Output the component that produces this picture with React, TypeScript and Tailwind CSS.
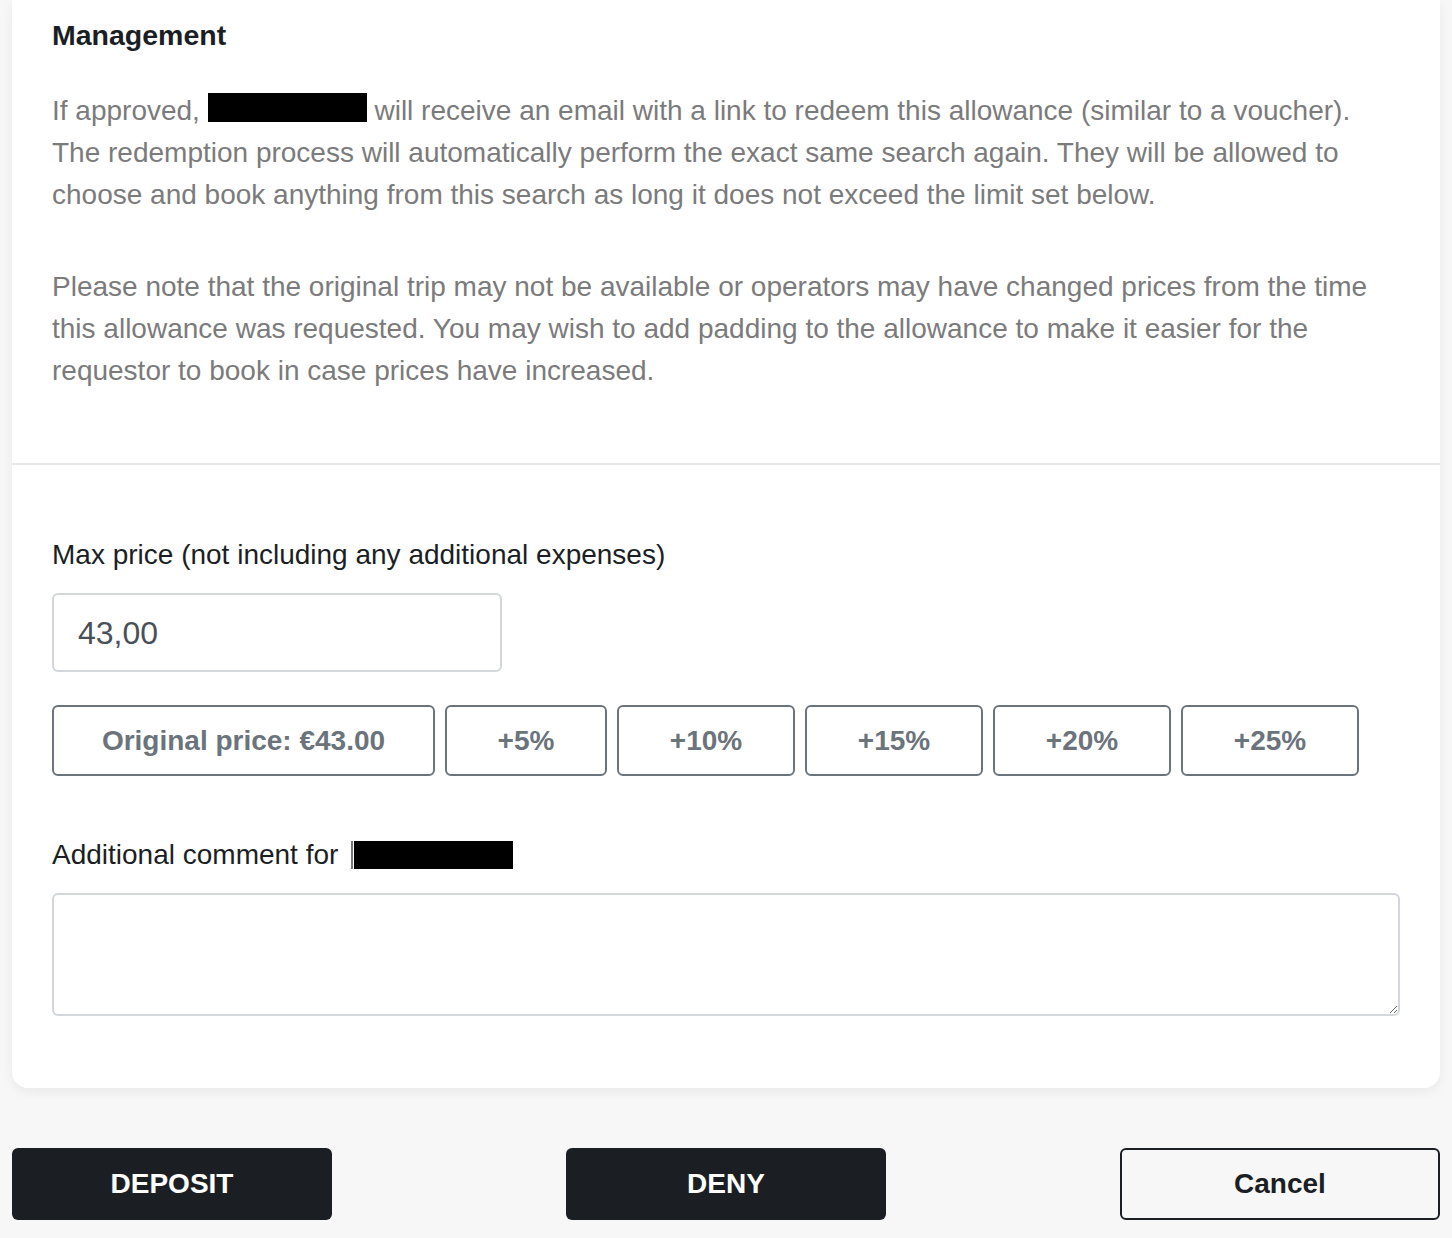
import React from "react";

const font = { fontFamily: '"Liberation Sans", Arial, Helvetica, sans-serif' };

export default function App() {
  const pcts = ["+5%", "+10%", "+15%", "+20%", "+25%"];
  return (
    <div className="min-h-[1238px] bg-[#f7f7f7] px-[12px] pb-[18px]" style={font}>
      <div className="rounded-b-[16px] bg-white shadow-[0_4px_12px_rgba(0,0,0,0.06)]">
        <div className="px-[40px] pt-[18px] pb-[71px]">
          <h2 className="text-[28.5px] font-bold leading-[34px] text-[#1b1f24]">Management</h2>
          <p className="mt-[38px] text-[28px] leading-[42px] text-[#7b7b7b]">
            If approved, <span className="inline-block h-[29px] w-[159px] bg-black align-[-2px]" /> will receive an email with a link to redeem this allowance (similar to a voucher). The redemption process will automatically perform the exact same search again. They will be allowed to choose and book anything from this search as long it does not exceed the limit set below.
          </p>
          <p className="mt-[50px] text-[28px] leading-[42px] text-[#7b7b7b]">
            Please note that the original trip may not be available or operators may have changed prices from the time this allowance was requested. You may wish to add padding to the allowance to make it easier for the requestor to book in case prices have increased.
          </p>
        </div>
        <div className="h-[2px] bg-[#e8e8e8]" />
        <div className="px-[40px] pt-[69px] pb-[72px]">
          <label className="block text-[28px] leading-[42px] text-[#1b1f24]">
            Max price (not including any additional expenses)
          </label>
          <div className="mt-[17px] flex h-[79px] w-[450px] items-center rounded-[6px] border-2 border-[#d3d7dc] px-[24px] text-[32px] text-[#4a5058]">
            43,00
          </div>
          <div className="mt-[33px] flex gap-[10px]">
            <button className="h-[71px] w-[383px] rounded-[6px] border-2 border-[#6b737b] text-[28px] font-bold text-[#6b737b]">
              Original price: €43.00
            </button>
            {pcts.map((p, i) => (
              <button
                key={p}
                className={
                  "h-[71px] rounded-[6px] border-2 border-[#6b737b] text-[28px] font-bold text-[#6b737b] " +
                  (i === 0 ? "w-[162px]" : "w-[178px]")
                }
              >
                {p}
              </button>
            ))}
          </div>
          <label className="mt-[58px] block text-[28px] leading-[42px] text-[#1b1f24]">
            Additional comment for{" "}
            <span className="ml-[5px] inline-block h-[28px] w-[2px] bg-[#1b1f24] align-[-5px] opacity-60" />
            <span className="ml-[1px] inline-block h-[28px] w-[159px] bg-black align-[-5px]" />
          </label>
          <textarea className="mt-[17px] block h-[123px] w-full resize-y rounded-[6px] border-2 border-[#d3d7dc] outline-none" />
        </div>
      </div>
      <div className="mt-[60px] flex justify-between">
        <button className="h-[72px] w-[320px] rounded-[6px] bg-[#1b1f24] text-[28px] font-bold text-white">DEPOSIT</button>
        <button className="h-[72px] w-[320px] rounded-[6px] bg-[#1b1f24] text-[28px] font-bold text-white">DENY</button>
        <button className="h-[72px] w-[320px] rounded-[6px] border-2 border-[#1b1f24] text-[28px] font-bold text-[#1b1f24]">Cancel</button>
      </div>
    </div>
  );
}
